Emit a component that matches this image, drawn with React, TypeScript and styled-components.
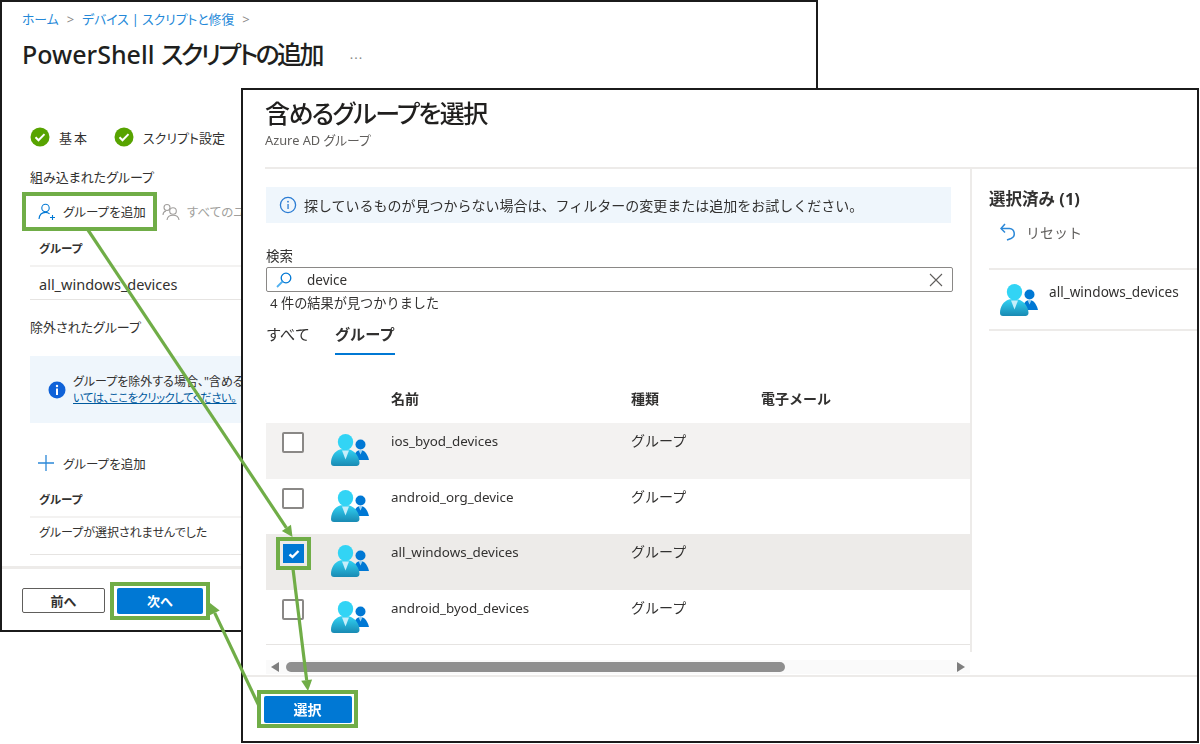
import React from "react";
import styled, { createGlobalStyle } from "styled-components";

const GlobalStyle = createGlobalStyle`
  html, body {
    margin: 0;
    background: #fff;
    overflow: hidden;
  }
  body {
    font-family: "Noto Sans", "Noto Sans CJK JP", sans-serif;
    color: #323130;
  }
`;

const GREEN = "#70ad47";

const Desktop = styled.div`
  position: relative;
  width: 1200px;
  height: 744px;
  overflow: hidden;
  filter: blur(0.3px);
`;

const Window = styled.section`
  position: absolute;
  box-sizing: border-box;
  background: #fff;
  border: 2px solid #1b1b1b;
  display: flex;
  flex-direction: column;
  overflow: hidden;
`;

const BackWindow = styled(Window)`
  left: 0;
  top: 0;
  width: 818px;
  height: 632px;
  font-feature-settings: "palt";
`;

const FrontWindow = styled(Window)`
  left: 241px;
  top: 88px;
  width: 958px;
  height: 655px;
`;

const Breadcrumb = styled.nav`
  margin: 8px 0 0 20px;
  display: flex;
  align-items: center;
  gap: 8px;
  font-size: 12.8px;
  line-height: 18px;
  color: #2488d8;
  span {
    color: #8a8886;
    font-size: 13px;
  }
`;

const TitleRow = styled.div`
  margin: 9px 0 0 20px;
  display: flex;
  align-items: center;
  gap: 28px;
`;

const Title = styled.h1`
  margin: 0;
  font-size: 25px;
  line-height: 34px;
  font-weight: 500;
  color: #201f1e;
  white-space: nowrap;
`;

const Kana = styled.span`
  letter-spacing: -2.6px;
`;

const More = styled.span`
  font-size: 13px;
  line-height: 34px;
  color: #8a8886;
  letter-spacing: 1px;
`;

const BackBody = styled.div`
  padding-left: 28px;
  display: flex;
  flex-direction: column;
  flex: 1;
`;

const Steps = styled.div`
  margin-top: 56px;
  display: flex;
  align-items: center;
  height: 20px;
  font-size: 13px;
`;

const Step = styled.div<{ $spacing?: number }>`
  display: flex;
  align-items: center;
  gap: 9px;
  margin-right: 25px;
  white-space: nowrap;
  letter-spacing: ${(p) => p.$spacing ?? 0}px;
`;

const SectionLabel = styled.div<{ $top: number }>`
  margin-top: ${(p) => p.$top}px;
  font-size: 13px;
  line-height: 18px;
  color: #323130;
  white-space: nowrap;
`;

const Toolbar = styled.div`
  margin: 6px 0 0 -8px;
  display: flex;
  align-items: center;
  height: 39px;
`;

const Callout = styled.div<{ $v: number; $h: number }>`
  display: inline-flex;
  align-items: center;
  flex: none;
  border: 4px solid ${GREEN};
  padding: ${(p) => p.$v}px ${(p) => p.$h}px;
`;

const ToolButton = styled.div<{ $muted?: boolean }>`
  display: flex;
  align-items: center;
  gap: 7px;
  font-size: 12.5px;
  white-space: nowrap;
  color: ${(p) => (p.$muted ? "#a19f9d" : "#323130")};
`;

const AddCallout = styled(Callout)`
  width: 135px;
  height: 39px;
  box-sizing: border-box;
  padding-left: 12px;
`;

const DisabledAction = styled(ToolButton)`
  margin-left: 5px;
`;

const TableHead = styled.div<{ $top: number }>`
  box-sizing: border-box;
  margin-top: ${(p) => p.$top}px;
  height: 36px;
  padding: 0 0 0 9px;
  display: flex;
  align-items: center;
  font-size: 11.5px;
  font-weight: 700;
  border-bottom: 2px solid #f3f2f1;
`;

const TableRow = styled.div<{ $height: number; $lift: number; $size: number; $drop?: number }>`
  box-sizing: border-box;
  height: ${(p) => p.$height}px;
  padding: ${(p) => p.$drop ?? 0}px 0 ${(p) => p.$lift}px 9px;
  display: flex;
  align-items: center;
  font-size: ${(p) => p.$size}px;
  white-space: nowrap;
  border-bottom: 1px solid #e6e4e2;
`;

const InfoBar = styled.div`
  margin-top: 20px;
  height: 67px;
  padding-left: 18px;
  display: flex;
  align-items: center;
  gap: 7px;
  background: #eff6fc;
  font-size: 12px;
  line-height: 16px;
  white-space: nowrap;
  a {
    color: #005a9e;
    font-size: 11.3px;
    letter-spacing: -0.4px;
    text-decoration: underline;
  }
`;

const AddRow = styled(ToolButton)`
  margin: 30px 0 0 8px;
  height: 20px;
  gap: 9px;
`;

const BackFooter = styled.footer`
  margin-top: auto;
  border-top: 3px solid #edebe9;
  height: 64px;
  padding: 2px 0 0 20px;
  box-sizing: border-box;
  display: flex;
  align-items: center;
  gap: 5px;
`;

const OutlineButton = styled.button`
  width: 83px;
  height: 25px;
  padding: 0;
  border: 1px solid #605e5c;
  border-radius: 2px;
  background: #fff;
  color: #323130;
  font-family: inherit;
  font-feature-settings: normal;
  font-size: 13px;
  font-weight: 700;
`;

const PrimaryButton = styled(OutlineButton)`
  width: 86px;
  height: 26px;
  border: none;
  background: #0078d4;
  color: #fff;
`;

const SelectButton = styled(PrimaryButton)`
  width: 88px;
  height: 27px;
  font-size: 14px;
`;

const FrontHeader = styled.header`
  box-sizing: border-box;
  height: 77px;
  padding: 5px 0 0 22px;
  font-feature-settings: "palt";
`;

const FrontTitle = styled(Title)`
  line-height: 36px;
  letter-spacing: -1.6px;
`;

const Subtitle = styled.div`
  font-size: 12.8px;
  line-height: 18px;
  color: #605e5c;
`;

const FrontDivider = styled.hr`
  margin: 0 0 0 22px;
  border: none;
  border-top: 2px solid #edebe9;
`;

const Main = styled.div`
  flex: 1;
  display: flex;
  min-height: 0;
`;

const LeftPane = styled.div`
  width: 727px;
  flex: none;
  display: flex;
  flex-direction: column;
  padding-left: 23px;
  box-sizing: border-box;
`;

const Notice = styled.div`
  box-sizing: border-box;
  margin-top: 18px;
  width: 685px;
  height: 36px;
  padding-left: 13px;
  display: flex;
  align-items: center;
  gap: 7px;
  background: #eff6fc;
  font-size: 14px;
  white-space: nowrap;
`;

const FieldLabel = styled.div`
  margin-top: 24px;
  font-size: 13.5px;
  line-height: 18px;
`;

const SearchBox = styled.div`
  box-sizing: border-box;
  margin-top: 2px;
  width: 687px;
  height: 25px;
  padding: 0 9px 0 9px;
  display: flex;
  align-items: center;
  gap: 15px;
  border: 1px solid #8a8886;
  border-radius: 2px;
  font-size: 13.5px;
`;

const SearchValue = styled.span`
  flex: 1;
`;

const ResultCount = styled.div`
  margin: 1px 0 0 4px;
  font-size: 13.2px;
  line-height: 20px;
  white-space: nowrap;
`;

const Tabs = styled.div`
  margin-top: 6px;
  height: 36px;
  display: flex;
  gap: 25px;
`;

const Tab = styled.div<{ $active?: boolean }>`
  box-sizing: border-box;
  height: 36px;
  padding-top: 4px;
  font-size: 15.2px;
  line-height: 22px;
  font-weight: ${(p) => (p.$active ? 700 : 400)};
  border-bottom: ${(p) => (p.$active ? "2px solid #0078d4" : "none")};
`;

const GROUP_COLUMNS = "65px 60px 240px 130px 1fr";

const ColumnHeader = styled.div`
  margin-top: 33px;
  height: 35px;
  display: grid;
  grid-template-columns: ${GROUP_COLUMNS};
  font-size: 14px;
  font-weight: 700;
  line-height: 22px;
`;

const GroupRow = styled.div<{ $shade?: string; $last?: boolean }>`
  box-sizing: border-box;
  height: 55.6px;
  padding-top: 9px;
  display: grid;
  grid-template-columns: ${GROUP_COLUMNS};
  align-items: start;
  font-size: 13.4px;
  line-height: 18px;
  background: ${(p) => p.$shade ?? "#fff"};
  border-bottom: ${(p) => (p.$last ? "1px solid #e6e4e2" : "none")};
`;

const KindCell = styled.div`
  font-size: 14px;
`;

const CheckCell = styled.div`
  padding-left: 16px;
`;

const IconCell = styled.div`
  padding-top: 2px;
`;

const Checkbox = styled.div`
  box-sizing: border-box;
  width: 22px;
  height: 21px;
  border: 2px solid #8a8886;
  border-radius: 2px;
  background: #fff;
`;

const CheckedBox = styled.div`
  width: 21px;
  height: 19px;
  display: flex;
  align-items: center;
  justify-content: center;
  background: #0078d4;
`;

const CheckCallout = styled(Callout)`
  margin: -6px 0 0 -6px;
`;

const ScrollTrack = styled.div`
  margin-top: 15px;
  height: 14px;
  display: flex;
  align-items: center;
  background: #fafafa;
  padding: 0 5px;
`;

const ArrowLeft = styled.i`
  width: 0;
  height: 0;
  border-style: solid;
  border-width: 5px 8px 5px 0;
  border-color: transparent #7d7d7d transparent transparent;
`;

const ArrowRight = styled.i`
  margin-left: auto;
  width: 0;
  height: 0;
  border-style: solid;
  border-width: 5px 0 5px 8px;
  border-color: transparent transparent transparent #7d7d7d;
`;

const ScrollThumb = styled.div`
  margin-left: 7px;
  width: 499px;
  height: 10px;
  border-radius: 5px;
  background: #8f8f8f;
`;

const RightPane = styled.aside`
  box-sizing: border-box;
  flex: 1;
  height: 483px;
  border-left: 2px solid #edebe9;
  padding-left: 17px;
`;

const SelectedTitle = styled.div`
  margin-top: 20px;
  font-size: 16.5px;
  line-height: 20px;
  font-weight: 700;
`;

const ResetRow = styled.div`
  margin: 11px 0 0 11px;
  height: 24px;
  display: flex;
  align-items: center;
  gap: 10px;
  font-size: 14px;
  color: #605e5c;
`;

const SelectedItem = styled.div`
  box-sizing: border-box;
  margin-top: 24px;
  height: 63px;
  padding: 14px 0 0 11px;
  display: flex;
  align-items: flex-start;
  gap: 10px;
  font-size: 13.6px;
  line-height: 16px;
  border-top: 2px solid #edebe9;
  border-bottom: 2px solid #edebe9;
`;

const FrontFooter = styled.footer`
  box-sizing: border-box;
  height: 66px;
  padding: 13px 0 0 15px;
  border-top: 2px solid #edebe9;
`;

const SelectCallout = styled(Callout)`
  display: flex;
  justify-content: center;
  width: 101px;
  height: 38px;
  margin-left: -1px;
  box-sizing: border-box;
`;

const ArrowLayer = styled.svg`
  position: absolute;
  inset: 0;
  pointer-events: none;
`;

const CheckCircle = () => (
  <svg width="20" height="20" viewBox="0 0 20 20">
    <circle cx="10" cy="10" r="9.5" fill="#57a300" />
    <path d="M5.5 10.3l3 3 6-6.2" fill="none" stroke="#fff" strokeWidth="2" />
  </svg>
);

const PersonAdd = () => (
  <svg width="18" height="18" viewBox="0 0 18 18" fill="none" stroke="#0078d4" strokeWidth="1.1">
    <circle cx="7.5" cy="5" r="3.7" />
    <path d="M1 16c.4-4 3-6.6 6.5-6.6 1.7 0 3 .5 4.1 1.5" />
    <path d="M12 14.5h5M14.5 12v5" />
  </svg>
);

const PeopleMuted = () => (
  <svg width="18" height="18" viewBox="0 0 18 18" fill="none" stroke="#a19f9d" strokeWidth="1.1">
    <circle cx="5" cy="4.5" r="3" />
    <circle cx="11" cy="8" r="3.3" />
    <path d="M1 12c0-2 1.400-3.600 3-4M5 17c.3-2.800 2.800-4.800 6-4.800s5.700 2 6 4.800" />
  </svg>
);

const InfoSolid = () => (
  <svg width="18" height="18" viewBox="0 0 18 18">
    <circle cx="9" cy="9" r="8.5" fill="#0f62d8" />
    <rect x="8" y="7.5" width="2" height="6.500" fill="#fff" />
    <circle cx="9" cy="5" r="1.200" fill="#fff" />
  </svg>
);

const InfoOutline = () => (
  <svg width="18" height="18" viewBox="0 0 18 18">
    <circle cx="9" cy="9" r="7.6" fill="none" stroke="#2b7cd3" strokeWidth="1.300" />
    <rect x="8.400" y="8" width="1.300" height="5" fill="#2b7cd3" />
    <circle cx="9" cy="5.700" r=".9" fill="#2b7cd3" />
  </svg>
);

const PlusIcon = () => (
  <svg width="16" height="16" viewBox="0 0 16 16" stroke="#2b88d8" strokeWidth="1.300">
    <path d="M8 0v16M0 8h16" />
  </svg>
);

const SearchIcon = () => (
  <svg width="16" height="16" viewBox="0 0 16 16" fill="none">
    <circle cx="10" cy="6" r="4.800" stroke="#0078d4" strokeWidth="1.300" />
    <path d="M6.500 9.500L1 15" stroke="#50b0f0" strokeWidth="1.800" />
  </svg>
);

const ClearIcon = () => (
  <svg width="14" height="14" viewBox="0 0 14 14" stroke="#605e5c" strokeWidth="1.100">
    <path d="M1 1l12 12M13 1L1 13" />
  </svg>
);

const ResetIcon = () => (
  <svg width="16" height="18" viewBox="0 0 16 18" fill="none" stroke="#2b88d8" strokeWidth="1.500">
    <path d="M1 5.500h8.500a5.200 5.200 0 0 1 1.500 10L7 17" />
    <path d="M5 1L1 5.500 5 9.500" />
  </svg>
);

const TickIcon = () => (
  <svg width="12" height="10" viewBox="0 0 12 10" fill="none" stroke="#fff" strokeWidth="2.400">
    <path d="M1.500 5.500l3 2.500 6-6" />
  </svg>
);

// azure AD の二人組アイコン
const GroupIcon = ({ id }: { id: string }) => (
  <svg width="39" height="32" viewBox="0 0 39 32">
    <defs>
      <linearGradient id={id} x1="0" y1="0" x2="0" y2="1">
        <stop offset="0" stopColor="#32d4f5" />
        <stop offset="1" stopColor="#198ab3" />
      </linearGradient>
    </defs>
    <path d="M22 26c1-6 3.500-10 7.500-10s7 4 8.500 10z" fill="#0078d4" />
    <circle cx="29.500" cy="10.500" r="5" fill="#0078d4" />
    <path d="M27.500 16l2 4.500 2-4.500z" fill="#9fd2f2" />
    <path d="M0 29c0-6 3.500-12 9-13.500 2-.6 7-.8 9.500 0 5.500 1.500 10 7.500 10 13.500 0 2-1.500 3-3 3H3c-2 0-3-1-3-3z" fill={`url(#${id})`} />
    <ellipse cx="14.500" cy="8" rx="7.700" ry="8" fill="#32d4f5" />
    <path d="M11 16.500h7l-3.500 9z" fill="#c6eefa" />
  </svg>
);

const groups = [
  { name: "ios_byod_devices", shade: "#f3f2f1" },
  { name: "android_org_device" },
  { name: "all_windows_devices", shade: "#edebe9", checked: true },
  { name: "android_byod_devices" },
];

const Arrow = ({ x1, y1, x2, y2 }: { x1: number; y1: number; x2: number; y2: number }) => {
  const a = Math.atan2(y2 - y1, x2 - x1);
  const len = 11;
  const wing = 5.500;
  const bx = x2 - Math.cos(a) * len;
  const by = y2 - Math.sin(a) * len;
  const nx = -Math.sin(a) * wing;
  const ny = Math.cos(a) * wing;
  return (
    <g>
      <line x1={x1} y1={y1} x2={bx} y2={by} stroke={GREEN} strokeWidth="3.2" />
      <polygon points={`${x2},${y2} ${bx + nx},${by + ny} ${bx - nx},${by - ny}`} fill={GREEN} />
    </g>
  );
};

export default function App() {
  return (
    <>
      <GlobalStyle />
      <Desktop>
        <BackWindow>
          <Breadcrumb>
            ホーム <span>&gt;</span> デバイス | スクリプトと修復 <span>&gt;</span>
          </Breadcrumb>
          <TitleRow>
            <Title>
              PowerShell <Kana>スクリプトの追加</Kana>
            </Title>
            <More>...</More>
          </TitleRow>
          <BackBody>
            <Steps>
              <Step $spacing={2}>
                <CheckCircle />
                基本
              </Step>
              <Step>
                <CheckCircle />
                スクリプト設定
              </Step>
            </Steps>
            <SectionLabel $top={21}>組み込まれたグループ</SectionLabel>
            <Toolbar>
              <AddCallout $v={0} $h={0}>
                <ToolButton>
                  <PersonAdd />
                  グループを追加
                </ToolButton>
              </AddCallout>
              <DisabledAction $muted>
                <PeopleMuted />
                すべてのユ
              </DisabledAction>
            </Toolbar>
            <TableHead $top={0}>グループ</TableHead>
            <TableRow $height={33} $lift={0} $drop={2} $size={14.5}>all_windows_devices</TableRow>
            <SectionLabel $top={18}>除外されたグループ</SectionLabel>
            <InfoBar>
              <InfoSolid />
              <div>
                グループを除外する場合、"含める
                <br />
                <a>いては、ここをクリックしてください。</a>
              </div>
            </InfoBar>
            <AddRow>
              <PlusIcon />
              グループを追加
            </AddRow>
            <TableHead $top={9}>グループ</TableHead>
            <TableRow $height={37} $lift={8} $size={12}>グループが選択されませんでした</TableRow>
          </BackBody>
          <BackFooter>
            <OutlineButton>前へ</OutlineButton>
            <Callout $v={2} $h={3}>
              <PrimaryButton>次へ</PrimaryButton>
            </Callout>
          </BackFooter>
        </BackWindow>

        <FrontWindow>
          <FrontHeader>
            <FrontTitle>含めるグループを選択</FrontTitle>
            <Subtitle>Azure AD グループ</Subtitle>
          </FrontHeader>
          <FrontDivider />
          <Main>
            <LeftPane>
              <Notice>
                <InfoOutline />
                探しているものが見つからない場合は、フィルターの変更または追加をお試しください。
              </Notice>
              <FieldLabel>検索</FieldLabel>
              <SearchBox>
                <SearchIcon />
                <SearchValue>device</SearchValue>
                <ClearIcon />
              </SearchBox>
              <ResultCount>4 件の結果が見つかりました</ResultCount>
              <Tabs>
                <Tab>すべて</Tab>
                <Tab $active>グループ</Tab>
              </Tabs>
              <ColumnHeader>
                <div />
                <div />
                <div>名前</div>
                <div>種類</div>
                <div>電子メール</div>
              </ColumnHeader>
              {groups.map((g, i) => (
                <GroupRow key={g.name} $shade={g.shade} $last={i === groups.length - 1}>
                  <CheckCell>
                    {g.checked ? (
                      <CheckCallout $v={3} $h={3}>
                        <CheckedBox>
                          <TickIcon />
                        </CheckedBox>
                      </CheckCallout>
                    ) : (
                      <Checkbox />
                    )}
                  </CheckCell>
                  <IconCell>
                    <GroupIcon id={`group-${i}`} />
                  </IconCell>
                  <div>{g.name}</div>
                  <KindCell>グループ</KindCell>
                  <div />
                </GroupRow>
              ))}
              <ScrollTrack>
                <ArrowLeft />
                <ScrollThumb />
                <ArrowRight />
              </ScrollTrack>
            </LeftPane>
            <RightPane>
              <SelectedTitle>選択済み (1)</SelectedTitle>
              <ResetRow>
                <ResetIcon />
                リセット
              </ResetRow>
              <SelectedItem>
                <GroupIcon id="group-selected" />
                all_windows_devices
              </SelectedItem>
            </RightPane>
          </Main>
          <FrontFooter>
            <SelectCallout $v={0} $h={0}>
              <SelectButton>選択</SelectButton>
            </SelectCallout>
          </FrontFooter>
        </FrontWindow>

        <ArrowLayer width="1200" height="744" viewBox="0 0 1200 744">
          <Arrow x1={88} y1={230} x2={292.500} y2={537} />
          <Arrow x1={293} y1={569} x2={308} y2={691} />
          <Arrow x1={259} y1={706} x2={210} y2={603} />
        </ArrowLayer>
      </Desktop>
    </>
  );
}
